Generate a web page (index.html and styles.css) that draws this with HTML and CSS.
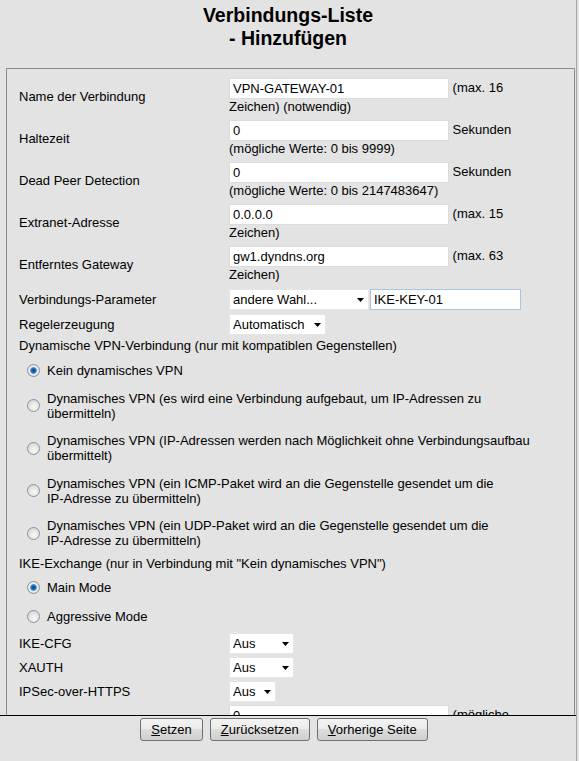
FILE: index.html
```html
<!DOCTYPE html>
<html>
<head>
  <meta charset="utf-8">
  <link rel="stylesheet" href="styles.css">
</head>
<body>
  <div class="page">
    <div class="header">
      <h1 class="page-title">Verbindungs-Liste<br>- Hinzufügen</h1>
    </div>

    <div class="content">
      <div class="box">
        <div class="form-row">
          <label class="label">Name der Verbindung</label>
          <div class="value"><input type="text" class="field" value="VPN-GATEWAY-01"> (max. 16 Zeichen) (notwendig)</div>
        </div>
        <div class="form-row">
          <label class="label">Haltezeit</label>
          <div class="value"><input type="text" class="field" value="0"> Sekunden<br>(mögliche Werte: 0 bis 9999)</div>
        </div>
        <div class="form-row">
          <label class="label">Dead Peer Detection</label>
          <div class="value"><input type="text" class="field" value="0"> Sekunden<br>(mögliche Werte: 0 bis 2147483647)</div>
        </div>
        <div class="form-row">
          <label class="label">Extranet-Adresse</label>
          <div class="value"><input type="text" class="field" value="0.0.0.0"> (max. 15 Zeichen)</div>
        </div>
        <div class="form-row">
          <label class="label">Entferntes Gateway</label>
          <div class="value"><input type="text" class="field" value="gw1.dyndns.org"> (max. 63 Zeichen)</div>
        </div>
        <div class="form-row single">
          <label class="label">Verbindungs-Parameter</label>
          <div class="value"><span class="select-wrap"><select class="select w-140"><option>andere Wahl...</option></select><svg class="select-arrow" viewBox="0 0 7 4"><path d="M0 0h7L3.5 4z"/></svg></span><input type="text" class="field key-field" value="IKE-KEY-01"></div>
        </div>
        <div class="form-row single">
          <label class="label">Regelerzeugung</label>
          <div class="value"><span class="select-wrap"><select class="select w-97"><option>Automatisch</option></select><svg class="select-arrow" viewBox="0 0 7 4"><path d="M0 0h7L3.5 4z"/></svg></span></div>
        </div>

        <p class="section-text">Dynamische VPN-Verbindung (nur mit kompatiblen Gegenstellen)</p>
        <div class="radio-list">
          <label class="radio-item"><input type="radio" name="dynvpn" checked><span class="radio-text">Kein dynamisches VPN</span></label>
          <label class="radio-item"><input type="radio" name="dynvpn"><span class="radio-text">Dynamisches VPN (es wird eine Verbindung aufgebaut, um <span class="nowrap">IP-Adressen</span> zu übermitteln)</span></label>
          <label class="radio-item"><input type="radio" name="dynvpn"><span class="radio-text">Dynamisches VPN (<span class="nowrap">IP-Adressen</span> werden nach Möglichkeit ohne Verbindungsaufbau übermittelt)</span></label>
          <label class="radio-item"><input type="radio" name="dynvpn"><span class="radio-text">Dynamisches VPN (ein <span class="nowrap">ICMP-Paket</span> wird an die Gegenstelle gesendet um die <span class="nowrap">IP-Adresse</span> zu übermitteln)</span></label>
          <label class="radio-item"><input type="radio" name="dynvpn"><span class="radio-text">Dynamisches VPN (ein <span class="nowrap">UDP-Paket</span> wird an die Gegenstelle gesendet um die <span class="nowrap">IP-Adresse</span> zu übermitteln)</span></label>
        </div>

        <p class="section-text">IKE-Exchange (nur in Verbindung mit "Kein dynamisches VPN")</p>
        <div class="radio-list mode-list">
          <label class="radio-item"><input type="radio" name="ikemode" checked><span class="radio-text">Main Mode</span></label>
          <label class="radio-item"><input type="radio" name="ikemode"><span class="radio-text">Aggressive Mode</span></label>
        </div>

        <div class="select-rows">
          <div class="form-row single">
            <label class="label">IKE-CFG</label>
            <div class="value"><span class="select-wrap"><select class="select w-65"><option>Aus</option></select><svg class="select-arrow" viewBox="0 0 7 4"><path d="M0 0h7L3.5 4z"/></svg></span></div>
          </div>
          <div class="form-row single">
            <label class="label">XAUTH</label>
            <div class="value"><span class="select-wrap"><select class="select w-65"><option>Aus</option></select><svg class="select-arrow" viewBox="0 0 7 4"><path d="M0 0h7L3.5 4z"/></svg></span></div>
          </div>
          <div class="form-row single">
            <label class="label">IPSec-over-HTTPS</label>
            <div class="value"><span class="select-wrap"><select class="select w-47"><option>Aus</option></select><svg class="select-arrow" viewBox="0 0 7 4"><path d="M0 0h7L3.5 4z"/></svg></span></div>
          </div>
          <div class="form-row">
            <label class="label">Rekeying</label>
            <div class="value"><input type="text" class="field" value="0"> (mögliche Werte: 0 bis 99999)</div>
          </div>
        </div>
      </div>
    </div>

    <div class="footer">
      <button class="button" type="button"><u>S</u>etzen</button>
      <button class="button" type="button"><u>Z</u>urücksetzen</button>
      <button class="button" type="button"><u>V</u>orherige Seite</button>
    </div>
  </div>
</body>
</html>
```

FILE: styles.css
```css
* {
  box-sizing: border-box;
}

html,
body {
  margin: 0;
  padding: 0;
}

body {
  background: #e3e3e3;
  color: #000;
  font-family: 'Liberation Sans', Arial, sans-serif;
  font-size: 13px;
  line-height: 15px;
}

.page {
  width: 577px;
  height: 761px;
  border-right: 1px solid #a8a8a8;
  display: flex;
  flex-direction: column;
}

.header {
  height: 50px;
  padding-top: 4px;
}

.page-title {
  margin: 0;
  text-align: center;
  font-size: 19.5px;
  line-height: 23px;
  font-weight: bold;
}

.content {
  flex: 1;
  overflow: hidden;
  padding-top: 18px;
}

.box {
  width: 569px;
  margin-left: 6px;
  border: 1px solid #8c8c8c;
  padding: 9px 12px 20px;
}

/* form rows */
.form-row {
  display: grid;
  grid-template-columns: 210px 300px;
  align-items: center;
}

.form-row + .form-row {
  margin-top: 6px;
}

.form-row + .form-row.single {
  margin-top: 7px;
}

.form-row.single + .form-row.single {
  margin-top: 4px;
}

.field {
  width: 220px;
  height: 21px;
  margin: 0;
  padding: 0 3px;
  border: 1px solid #dcdcdc;
  background: #fff;
  color: #000;
  font: 13px 'Liberation Sans', Arial, sans-serif;
  vertical-align: middle;
}

.key-field {
  width: 151px;
  margin-left: 1px;
  border-color: #a9c4e2;
}

.select-wrap {
  position: relative;
  display: inline-block;
  vertical-align: middle;
}

.select {
  display: block;
  height: 21px;
  margin: 0;
  padding: 0 0 0 3px;
  border: 1px solid #e6e6e6;
  background: #fff;
  color: #000;
  font: 13px 'Liberation Sans', Arial, sans-serif;
  -webkit-appearance: none;
  appearance: none;
}

.select-arrow {
  position: absolute;
  right: 5px;
  top: 9px;
  width: 7px;
  height: 4px;
  fill: #000;
  pointer-events: none;
}

.w-140 { width: 140px; }
.w-97 { width: 97px; }
.w-65 { width: 65px; }
.w-47 { width: 47px; }

/* radio groups */
.section-text {
  margin: 3px 0 0;
}

.radio-list {
  display: flex;
  flex-direction: column;
  gap: 12.5px;
  margin-top: 10px;
  padding-left: 8px;
}

.radio-item {
  display: flex;
  align-items: center;
  gap: 7px;
}

.radio-text {
  max-width: 495px;
}

.nowrap {
  white-space: nowrap;
}

.radio-item input {
  flex: none;
  width: 13px;
  height: 13px;
  margin: 0;
  border: 1px solid #929292;
  border-radius: 50%;
  background: radial-gradient(circle at 55% 65%, #fafafa, #e2e2e2 55%, #c9c9c9);
  -webkit-appearance: none;
  appearance: none;
}

.radio-item input:checked {
  background: radial-gradient(circle at 50% 50%, #0a3f73 0, #1f6db5 2px, #4f9ad8 3px, #eef2f6 3.8px, #e4e4e4 5px, #cccccc 100%);
}

.radio-list + .section-text {
  margin-top: 8px;
}

.mode-list {
  gap: 14px;
  margin-top: 9px;
}

.select-rows {
  margin-top: 9px;
}

.select-rows .form-row.single + .form-row.single {
  margin-top: 3px;
}

.select-rows .form-row.single + .form-row:not(.single) {
  margin-top: 3px;
}

/* button bar */
.footer {
  height: 46px;
  border-top: 1px solid #000;
  padding: 2px 8px 0 0;
  display: flex;
  justify-content: center;
  align-items: flex-start;
  gap: 7px;
}

.button {
  height: 23px;
  padding: 0 10px;
  border: 1px solid #707070;
  border-radius: 3px;
  background: linear-gradient(#f3f3f3, #ebebeb 50%, #dddddd 50%, #cfcfcf);
  color: #000;
  font: 13px 'Liberation Sans', Arial, sans-serif;
}
```
